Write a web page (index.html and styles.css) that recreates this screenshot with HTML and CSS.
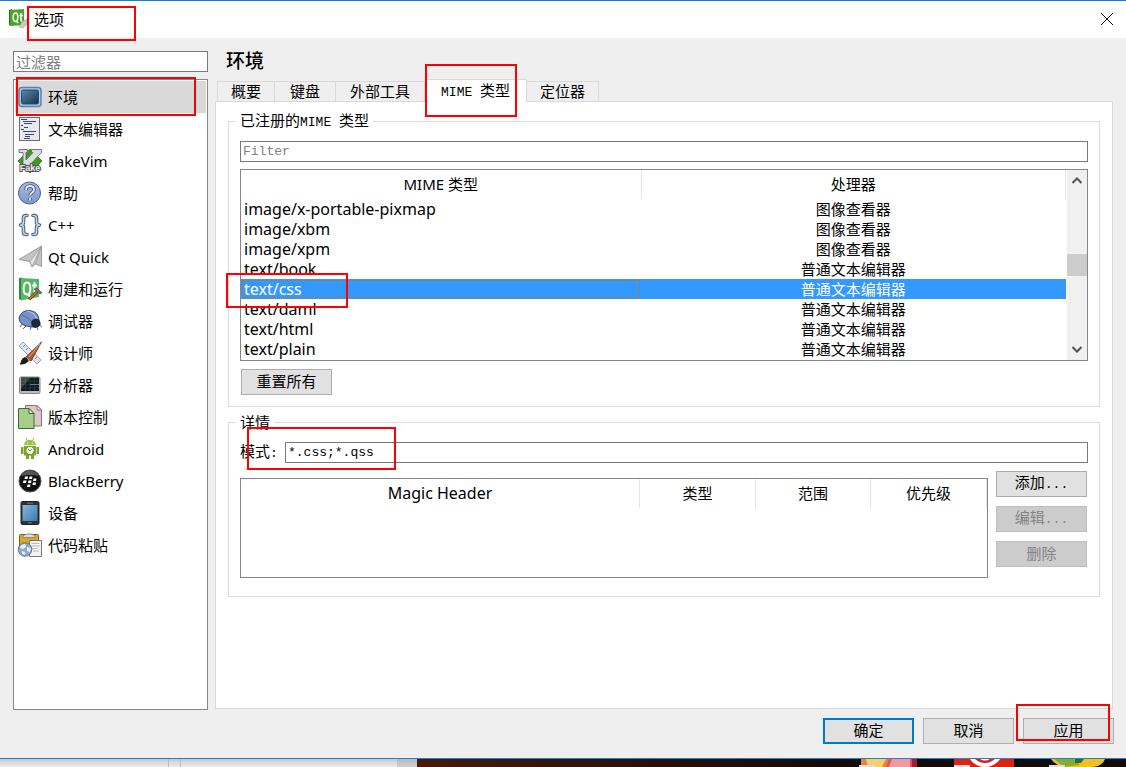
FILE: index.html
```html
<!DOCTYPE html>
<html lang="zh-CN">
<head>
<meta charset="utf-8">
<meta name="viewport" content="width=device-width, initial-scale=1">
<title>选项</title>
<link rel="stylesheet" href="styles.css">
</head>
<body>
<main class="dialog">
  <header class="titlebar">
    <svg class="app-icon" viewBox="0 0 18 20" aria-hidden="true">
      <path d="M0 1 3 0v17l-3-1z" fill="#27701c"/><path d="M1 1 15 0v16L1 17z" fill="#4ba52c"/>
      <path d="M6.500 4C3.500 4 3.300 12.500 6.500 12.500S9.500 4 6.500 4zM7.500 12l1.500 2M12 4v7q0 1.500 1.500 1M10.500 6.500h3.500" fill="none" stroke="#fff" stroke-width="1.500"/>
      <path d="m10 18 3-5 5-3v5l-4 4z" fill="#c9c9c9" stroke="#999" stroke-width=".5"/>
    </svg>
    <h1 class="title marked mark-title">选项</h1>
    <button class="close" type="button" aria-label="关闭">
      <svg viewBox="0 0 12 12" aria-hidden="true"><path d="M0 0 12 12M12 0 0 12" stroke="#000" fill="none"/></svg>
    </button>
  </header>

  <div class="content">
    <nav class="sidebar">
      <input class="field cjk-field" type="text" placeholder="过滤器" aria-label="过滤器">
      <ul class="categories">
        <li><button type="button" class="category current marked mark-category">
          <svg viewBox="0 0 24 24" aria-hidden="true"><defs><linearGradient id="scr" x2="1" y2="1"><stop stop-color="#5f87a8"/><stop offset="1" stop-color="#15304c"/></linearGradient></defs><rect x="1" y="2.500" width="22" height="19" rx="3" fill="#a9cdf0" stroke="#5b82ae" stroke-width="1.500"/><rect x="3.500" y="5" width="17" height="14" rx="1.500" fill="url(#scr)" stroke="#27496b"/></svg>环境</button></li>
        <li><button type="button" class="category">
          <svg viewBox="0 0 24 24" aria-hidden="true"><rect x="1.500" y=".5" width="20" height="23" fill="#e9e9eb" stroke="#6b6b6e"/><path d="M3 2.500h6M5 4.500h13M6 6.500h8M3 8.500h2M6 10.500h4M3 12.500h3M5 14.500h13M7 17.500h9M7 19.500h5M6 21.500h6" stroke="#2c4a86" stroke-width="1.200"/></svg>文本编辑器</button></li>
        <li><button type="button" class="category">
          <svg viewBox="0 0 24 24" aria-hidden="true"><path d="m12 0 12 12-12 12L0 12z" fill="#35a01c" stroke="#1d6b10" stroke-width=".7"/><path d="M1 .5h8.500v3H8V11l7-7.500h-1.500v-3h10v3L11 17H5V3.500H1z" fill="#ddd" stroke="#666" stroke-width=".9"/><text class="vim-label" x="12" y="22" text-anchor="middle">Fake</text></svg>FakeVim</button></li>
        <li><button type="button" class="category">
          <svg viewBox="0 0 24 24" aria-hidden="true"><defs><linearGradient id="hlp" x2="0" y2="1"><stop stop-color="#a9bade"/><stop offset="1" stop-color="#7e97ca"/></linearGradient></defs><circle cx="11.500" cy="12" r="11" fill="url(#hlp)" stroke="#4b6290"/><path d="M8 9q0-4 4-4t4 3.500q0 2-2 3.200t-2 2.800M12 17v2.500" fill="none" stroke="#3c5179" stroke-width="3.600"/><path d="M8 9q0-4 4-4t4 3.500q0 2-2 3.200t-2 2.800M12 17v2.500" fill="none" stroke="#e5ebf7" stroke-width="1.900"/></svg>帮助</button></li>
        <li><button type="button" class="category">
          <svg viewBox="0 0 24 24" aria-hidden="true"><g fill="none" stroke-linejoin="round" stroke-linecap="round"><path d="M9 2.500H8Q5.500 2.500 5.500 5v4q0 3-3 3 3 0 3 3v4q0 2.500 2.500 2.500h1M15 2.500h1q2.500 0 2.500 2.500v4q0 3 3 3-3 0-3 3v4q0 2.500-2.500 2.500h-1" stroke="#40597d" stroke-width="3.600"/><path d="M9 2.500H8Q5.500 2.500 5.500 5v4q0 3-3 3 3 0 3 3v4q0 2.500 2.500 2.500h1M15 2.500h1q2.500 0 2.500 2.500v4q0 3 3 3-3 0-3 3v4q0 2.500-2.500 2.500h-1" stroke="#c5d2e4" stroke-width="1.700"/></g></svg>C++</button></li>
        <li><button type="button" class="category">
          <svg viewBox="0 0 24 24" aria-hidden="true"><path d="M23.500 1v20.500l-6-2.500-3.500 3-2-5.500L1 14.500z" fill="#c4c4c4" stroke="#8b8b8b" stroke-width=".8"/><path d="M23 2 12 16.500l2 5.500zM23 2l-5.500 17" fill="#e4e4e4" stroke="#999" stroke-width=".7"/></svg>Qt Quick</button></li>
        <li><button type="button" class="category">
          <svg viewBox="0 0 24 24" aria-hidden="true"><path d="M1 1 4 .5v23L1 22z" fill="#2b8a3c"/><path d="m3 1 18 1v18L3 23.500z" fill="#55b864"/><path d="M9 5.500c-4.500 0-4.500 12 0 12s4.500-12 0-12zM10 17l2.500 3M16.500 5v10M14 8.500h5" fill="none" stroke="#fff" stroke-width="2"/><path d="M11 22.500 20 14" stroke="#6d3513" stroke-width="3"/><path d="M11 22.500 20 14" stroke="#c97b3a" stroke-width="1.500"/><path d="m16 12 3-1 5 5-2 1z" fill="#777" stroke="#444" stroke-width=".6"/></svg>构建和运行</button></li>
        <li><button type="button" class="category">
          <svg viewBox="0 0 24 24" aria-hidden="true"><path d="m4 15-2 3M8 17l-3 3M13 18l-1 3M19 18l1 3M21 16l3 2" stroke="#666" fill="none"/><path d="M1 9Q3 1 12 1.500q9 1.500 9 10-1 6-7 6.500Q1 17 1 9z" fill="#7691c6" stroke="#354c78"/><path d="M9 2q7 1 10 8" fill="none" stroke="#b6c5e5" stroke-width="1.200"/><path d="M4 6q6 2 10 7" fill="none" stroke="#4e689b"/><path d="M13 14q1-5 7-4 3 2 2.500 6-3 4-7 2.500-2.500-1.500-2.500-4.500z" fill="#1e2838"/></svg>调试器</button></li>
        <li><button type="button" class="category">
          <svg viewBox="0 0 24 24" aria-hidden="true"><path d="M5 1 23 19l-4 4L1 5z" fill="#dfe4ee" stroke="#97a1b5"/><path d="m7 4-2 2m5 1L8 9m8 4-2 2m5 1-2 2" stroke="#7b879f"/><path d="M23.500 1 13 20l-5-4z" fill="#b4592a" stroke="#5c2913" stroke-width=".8"/><path d="m22 3-11 13" stroke="#e9a978"/><path d="m8 15 4 4-3 1.500z" fill="#b9bcc0" stroke="#555" stroke-width=".6"/><path d="M7 16q3 1 3.500 4-3 4-9 3.500Q3 21 3 20q1-3 4-4z" fill="#1e1a18"/></svg>设计师</button></li>
        <li><button type="button" class="category">
          <svg viewBox="0 0 24 24" aria-hidden="true"><rect x="1.500" y="4" width="20.500" height="16.500" rx="1.500" fill="#bbb" stroke="#888"/><path d="M3 4.500h18V18H3z" fill="#15191c"/><path d="M3 8h18M3 11.500h18M3 15h18M7.500 5v13M12 5v13M16.500 5v13" stroke="#2b464c" stroke-width=".6"/><path d="M3 5h9L3 16z" fill="#fff" opacity=".2"/><path d="M12 11.500h9" stroke="#5c98a5" stroke-width=".8"/></svg>分析器</button></li>
        <li><button type="button" class="category">
          <svg viewBox="0 0 24 24" aria-hidden="true"><path d="M7.500.5H19L23.500 5v16h-16z" fill="#dcc7cb" stroke="#8a7478"/><path d="M19 .5V5h4.500z" fill="#f3e6e8" stroke="#8a7478"/><path d="M.5 3.500H11l5 5v15H.5z" fill="#a5cf86" stroke="#47653a"/><path d="M11 3.500v5h5z" fill="#dbf0c8" stroke="#47653a"/></svg>版本控制</button></li>
        <li><button type="button" class="category">
          <svg viewBox="0 0 24 24" aria-hidden="true"><path d="m8 1 1.500 3M16 1l-1.500 3" stroke="#8db43c"/><path d="M6 8q.5-5 6-5t6 5z" fill="#9cc53c"/><path d="M6 9h12v9.500H6z" fill="#7fa62a"/><path d="M3 10h2.500v7H3zM18.500 10H21v7h-2.500zM8 18h3v4H8zM13 18h3v4h-3z" fill="#7fa62a"/><circle cx="12" cy="13.500" r="4.300" fill="#eef2e4" stroke="#66852a"/><path d="m10 12 2 2 2-2" stroke="#8b9a70" fill="none"/><path d="M9 6h1M14 6h1" stroke="#fff"/></svg>Android</button></li>
        <li><button type="button" class="category">
          <svg viewBox="0 0 24 24" aria-hidden="true"><circle cx="12" cy="12" r="11" fill="#111" stroke="#555"/><path d="M3 7q4-6 9-5.500Q18 2 21 7q-9-2-18 0z" fill="#555"/><path d="m7 7.500 3 0-.5 2.500h-3zm4.500 0h3L14 10h-3zM5.500 11.500h3L8 14H5zm5 0h3L13 14h-3zm5-2h3L18 12h-3zM9.500 15.500h3L12 18H9zm5.500-2h3l-.5 2.500h-3z" fill="#fff"/></svg>BlackBerry</button></li>
        <li><button type="button" class="category">
          <svg viewBox="0 0 24 24" aria-hidden="true"><defs><linearGradient id="dev" x2="1" y2="1"><stop stop-color="#87b9df"/><stop offset="1" stop-color="#3c78ae"/></linearGradient></defs><rect x="3" y=".5" width="18" height="23" rx="1.500" fill="#2d3238" stroke="#1c1f24"/><path d="M4.500 4h15v16h-15z" fill="url(#dev)"/><path d="M9 2.200h6M10 21.800h4" stroke="#777"/></svg>设备</button></li>
        <li><button type="button" class="category">
          <svg viewBox="0 0 24 24" aria-hidden="true"><rect x="1.500" y="1.500" width="19" height="18" rx="1" fill="#d8a926" stroke="#7c5f17"/><path d="M5 4.500V2.500l4-1.500h4l4 1.500v2z" fill="#ddd" stroke="#777" stroke-width=".8"/><path d="M11.500 7.500h12v16h-12z" fill="#f4f4f4" stroke="#777"/><path d="M13.500 10.500h8M13.500 13h8M13.500 15.500h6M15 18h6" stroke="#aaa" stroke-width=".8"/><circle cx="7" cy="16.500" r="6.800" fill="#8fa9cf" stroke="#4a608a" stroke-width=".8"/><path d="m3 12 4-1 1 3-3 2-3-1zM9 14l4 1-1 4-3-1zM4 18l3 1v3l-3-1z" fill="#e9eff6"/></svg>代码粘贴</button></li>
      </ul>
    </nav>

    <section class="settings">
      <h2 class="heading">环境</h2>
      <div class="tabs" role="tablist">
        <button type="button" class="tab" role="tab">概要</button>
        <button type="button" class="tab" role="tab">键盘</button>
        <button type="button" class="tab" role="tab">外部工具</button>
        <button type="button" class="tab active marked mark-tab" role="tab" aria-selected="true"><span class="mono">MIME </span>类型</button>
        <button type="button" class="tab" role="tab">定位器</button>
      </div>

      <div class="panel" role="tabpanel">
        <fieldset class="group">
          <legend>已注册的<span class="mono">MIME </span>类型</legend>
          <input class="field" type="text" placeholder="Filter" aria-label="Filter">
          <div class="list-frame">
            <table class="grid mime-table">
              <colgroup><col class="col-type"><col></colgroup>
              <thead><tr><th scope="col">MIME 类型</th><th scope="col">处理器</th></tr></thead>
              <tbody>
                <tr><td>image/x-portable-pixmap</td><td>图像查看器</td></tr>
                <tr><td>image/xbm</td><td>图像查看器</td></tr>
                <tr><td>image/xpm</td><td>图像查看器</td></tr>
                <tr><td>text/book</td><td>普通文本编辑器</td></tr>
                <tr class="selected"><td class="marked mark-row">text/css</td><td>普通文本编辑器</td></tr>
                <tr><td>text/daml</td><td>普通文本编辑器</td></tr>
                <tr><td>text/html</td><td>普通文本编辑器</td></tr>
                <tr><td>text/plain</td><td>普通文本编辑器</td></tr>
              </tbody>
            </table>
            <div class="scrollbar">
              <button type="button" class="arrow" aria-label="向上滚动"><svg viewBox="0 0 10 7" aria-hidden="true"><path d="m.5 6 4.500-4.500L9.500 6" fill="none" stroke="#555" stroke-width="2"/></svg></button>
              <div class="track"><div class="thumb"></div></div>
              <button type="button" class="arrow" aria-label="向下滚动"><svg viewBox="0 0 10 7" aria-hidden="true"><path d="M.5 1 5 5.500 9.500 1" fill="none" stroke="#555" stroke-width="2"/></svg></button>
            </div>
          </div>
          <button type="button" class="button reset">重置所有</button>
        </fieldset>

        <fieldset class="group">
          <legend>详情</legend>
          <div class="pattern marked mark-pattern">
            <label for="pattern">模式<span class="mono">:</span></label>
            <input class="field" id="pattern" type="text" value="*.css;*.qss">
          </div>
          <div class="magic">
            <div class="magic-frame">
              <table class="grid magic-table">
                <colgroup><col><col class="col-kind"><col class="col-range"><col class="col-priority"></colgroup>
                <thead><tr><th scope="col" class="latin">Magic Header</th><th scope="col">类型</th><th scope="col">范围</th><th scope="col">优先级</th></tr></thead>
              </table>
            </div>
            <div class="magic-actions">
              <button type="button" class="button">添加<span class="mono">...</span></button>
              <button type="button" class="button" disabled>编辑<span class="mono">...</span></button>
              <button type="button" class="button" disabled>删除</button>
            </div>
          </div>
        </fieldset>
      </div>
    </section>
  </div>

  <footer class="footer">
    <button type="button" class="button default">确定</button>
    <button type="button" class="button">取消</button>
    <button type="button" class="button marked mark-apply">应用</button>
  </footer>
</main>

<div class="desktop" aria-hidden="true">
  <div class="behind-window"><span class="splitter"></span></div>
  <div class="behind-edge"></div>
  <div class="wallpaper">
    <svg class="desktop-icons" viewBox="0 0 268 8">
      <path d="M3 0h48v8H3z" fill="#e9862a"/><path d="M8 0h20l-4 8H10z" fill="#f8cf70"/><path d="M31 0h28v8H28z" fill="#d95564"/><path d="M34 0h18v8H31z" fill="#ef9aa2"/><path d="M54 0h5v8h-5z" fill="#a51c2c"/>
      <path d="M96 0h60v8H96z" fill="#dc2412"/><circle cx="127" cy="-10" r="16" fill="none" stroke="#fff" stroke-width="4"/><path d="M122 0h10q-5 3-10 0z" fill="#fff"/>
      <path d="M193 0h54q-3 8-14 8h-24q-10 0-16-8z" fill="#f0c21c"/><path d="M196 0h20l6 6-16 2z" fill="#80ad33"/><path d="M217 0h9l-3 4h-6z" fill="#276d3b"/>
      <path d="M1 6h16v2H1zM96 6h16v2H96zM191 6h16v2h-16z" fill="#ddd"/>
    </svg>
  </div>
</div>
</body>
</html>
```
FILE: styles.css
```css
*, *::before, *::after { box-sizing: border-box; }

body {
  margin: 0;
  min-height: 100vh;
  display: flex;
  flex-direction: column;
  background: #efefef;
  color: #000;
  font: 15px/20px "Noto Sans", "Noto Sans CJK SC", sans-serif;
}

button, input {
  font: inherit;
  color: inherit;
}

button {
  padding: 0;
  border: 0;
  background: none;
}

.mono {
  font-family: "Liberation Mono", monospace;
  font-size: 13px;
  white-space: pre;
}

/* Window */
.dialog {
  flex: 1;
  display: flex;
  flex-direction: column;
  border-top: 1px solid #1a7fd4;
  border-bottom: 1px solid #1883d7;
}

.titlebar {
  display: flex;
  align-items: center;
  height: 37px;
  padding: 0 12px 2px 9px;
  background: #fff;
}

.app-icon { width: 18px; height: 20px; }

.title {
  flex: 1;
  margin: 0 0 0 7px;
  font-size: 15px;
  font-weight: 400;
}

.close {
  display: flex;
  padding: 1px;
}

.close svg { width: 12px; height: 12px; }

.content {
  flex: 1;
  display: grid;
  grid-template-columns: 195px minmax(0, 1fr);
  gap: 7px;
  padding: 13px 13px 0;
}

/* Sidebar */
.sidebar {
  display: flex;
  flex-direction: column;
  gap: 7px;
}

.field {
  display: block;
  width: 100%;
  height: 21px;
  padding: 0 2px;
  border: 1px solid #7a7a7a;
  border-radius: 0;
  background: #fff;
  font-family: "Liberation Mono", monospace;
  font-size: 13px;
}

.cjk-field {
  font-family: "Noto Sans CJK SC", sans-serif;
  font-size: 15px;
}

.field::placeholder { color: #808080; opacity: 1; }

.categories {
  flex: 1;
  margin: 0;
  padding: 1px;
  border: 1px solid #828790;
  background: #fff;
  list-style: none;
}

.category {
  display: flex;
  align-items: center;
  gap: 6px;
  width: 100%;
  height: 32px;
  padding: 0 3px;
  text-align: left;
}

.category svg { width: 24px; height: 24px; }
.category.current { background: #d9d9d9; }

.vim-label {
  fill: #eee;
  stroke: #555;
  stroke-width: 2px;
  paint-order: stroke;
  font: bold 9px "Liberation Sans", sans-serif;
}

/* Tabs */
.settings {
  display: flex;
  flex-direction: column;
  padding-bottom: 1px;
}

.heading {
  margin: 0 0 8px 11px;
  font-size: 19px;
  line-height: 20px;
  font-weight: 500;
}

.tabs {
  display: flex;
  align-items: flex-end;
  height: 22px;
  padding-left: 2px;
}

.tab {
  height: 20px;
  padding: 0 13px;
  border: 1px solid #d9d9d9;
  border-width: 1px 1px 0 0;
  line-height: 19px;
  white-space: nowrap;
}

.tab:first-child { border-left-width: 1px; }
.tab:nth-child(2) { padding: 0 15px; }
.tab:nth-child(3) { padding: 0 14px; }

.tab.active {
  height: 23px;
  margin-bottom: -1px;
  padding: 0 16px;
  background: #fff;
}

.panel {
  flex: 1;
  padding: 8px 12px;
  border: 1px solid #d9d9d9;
  background: #fff;
}

/* Groups */
.group {
  min-width: 0;
  margin: 0 0 5px;
  padding: 8px 11px 11px;
  border: 1px solid #dcdcdc;
}

.group + .group { padding-top: 9px; }

.group legend {
  margin-left: -4px;
  padding: 0 4px;
  line-height: 20px;
}

.grid {
  width: 100%;
  border-collapse: collapse;
  table-layout: fixed;
}

.grid th {
  height: 29px;
  padding: 0 0 2px;
  border-right: 1px solid #e5e5e5;
  font-weight: 400;
}

.grid td { height: 20px; padding: 0 3px; }
.grid .latin, .mime-table td:first-child { font-size: 16px; }

.list-frame {
  display: flex;
  height: 192px;
  margin: 7px 0 8px;
  border: 1px solid #828790;
}

.mime-table {
  flex: 1;
  width: auto;
  height: 189px;
  margin-right: 1px;
}

.mime-table td + td { text-align: center; }
.col-type { width: 400px; }

.selected { background: #3399ff; color: #fff; }

.selected td:first-child {
  outline: 1px dotted #d06a10;
  outline-offset: -2px;
}

.scrollbar {
  display: flex;
  flex-direction: column;
  width: 20px;
  background: #f0f0f0;
}

.arrow {
  display: flex;
  align-items: center;
  justify-content: center;
  height: 21px;
}

.arrow svg { width: 10px; height: 7px; }

.track {
  flex: 1;
  padding-top: 63px;
}

.thumb { height: 22px; background: #cdcdcd; }

.button {
  display: block;
  width: 91px;
  height: 26px;
  padding-bottom: 2px;
  border: 1px solid #adadad;
  background: #e1e1e1;
  line-height: 20px;
  text-align: center;
}

.button:disabled {
  border-color: #bfbfbf;
  background: #ccc;
  color: #838383;
}

.button.default { border: 2px solid #0078d7; }
.reset { margin-left: 1px; }

.pattern {
  display: flex;
  align-items: center;
}

.pattern label { flex: none; width: 45px; }

.magic {
  display: flex;
  align-items: flex-start;
  gap: 8px;
  margin-top: 7px;
}

.magic-frame {
  flex: 1;
  height: 100px;
  margin-top: 7px;
  border: 1px solid #828790;
}

.magic-actions {
  display: flex;
  flex-direction: column;
  gap: 9px;
  padding: 0 1px 18px 0;
}

.col-kind { width: 116px; }
.col-range { width: 115px; }
.col-priority { width: 116px; }

.footer {
  display: flex;
  justify-content: flex-end;
  gap: 9px;
  padding: 8px 12px 14px;
}

/* Red highlight frames */
.marked { position: relative; }

.marked::after {
  content: "";
  position: absolute;
  border: 2px solid #f00;
  pointer-events: none;
}

.mark-title::after { left: -7px; top: -3px; width: 109px; height: 35px; }
.mark-category::after { left: 1px; top: -4px; width: 180px; height: 39px; z-index: 1; }
.mark-tab::after { left: 0; top: -16px; width: 92px; height: 53px; z-index: 1; }
.mark-row::after { left: -15px; top: -6px; width: 122px; height: 35px; z-index: 1; }
.mark-pattern::after { left: 7px; top: -14px; width: 149px; height: 43px; }
.mark-apply::after { left: -8px; top: -15px; width: 94px; height: 37px; }

/* Desktop showing below the window */
.desktop {
  display: flex;
  height: 8px;
}

.behind-window {
  width: 397px;
  padding-left: 168px;
  background: linear-gradient(#c9c9c9, #ececec);
}

.splitter {
  display: block;
  width: 13px;
  height: 8px;
  border: 1px solid #bbb;
  border-width: 0 1px;
}

.behind-edge { width: 20px; background: linear-gradient(#b8b8b8, #d0d0d0); }

.wallpaper {
  flex: 1;
  display: flex;
  justify-content: flex-end;
  background: linear-gradient(90deg, #47190d, #2a110b 30%, #120a08 60%, #100a08);
}

.desktop-icons { width: 268px; height: 8px; }
```
